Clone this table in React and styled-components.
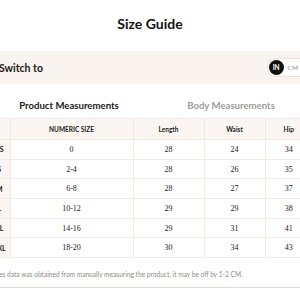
import React, { useState } from 'react'
import styled, { createGlobalStyle } from 'styled-components'

const GlobalStyle = createGlobalStyle`
  html, body {
    margin: 0;
    padding: 0;
    background: #fff;
    overflow: hidden;
  }
  body {
    font-family: Lato, "Noto Sans", sans-serif;
    color: #1a1a1a;
  }
`

const Modal = styled.div`
  width: 324px;
  margin-left: -12px;
  display: flex;
  flex-direction: column;
`

const Title = styled.h2`
  margin: 0;
  padding-top: 15px;
  height: 51px;
  box-sizing: border-box;
  text-align: center;
  font-size: 14px;
  font-weight: 700;
  color: #111;
`

const SwitchBar = styled.div`
  height: 33px;
  background: #f9f4f0;
  display: flex;
  align-items: center;
  justify-content: space-between;
  padding: 0 0 0 11px;
`

const SwitchLabel = styled.span`
  font-size: 10.5px;
  font-weight: 700;
  color: #1a1a1a;
`

const Pill = styled.div`
  display: flex;
  align-items: center;
  gap: 4px;
  background: #fff;
  border: 1px solid #e8e1da;
  border-radius: 9px;
  padding: 1px 13px 1px 1px;
`

const PillOption = styled.button`
  border: 0;
  cursor: pointer;
  font-family: Lato, "Noto Sans", sans-serif;
  font-size: 6.5px;
  font-weight: ${p => (p.$active ? 700 : 400)};
  padding: 0;
  width: ${p => (p.$active ? '15px' : 'auto')};
  height: 15px;
  border-radius: 8px;
  background: ${p => (p.$active ? '#111' : 'transparent')};
  color: ${p => (p.$active ? '#fff' : '#888')};
`

const Tabs = styled.div`
  display: flex;
  height: 34px;
  border-bottom: 1px solid #f1ece7;
`

const Tab = styled.button`
  flex: 1;
  border: 0;
  background: none;
  padding: 9px 0 0;
  cursor: pointer;
  font-family: Lato, "Noto Sans", sans-serif;
  font-size: 9.6px;
  font-weight: 700;
  color: ${p => (p.$active ? '#1a1a1a' : '#a09b97')};
`

const Table = styled.table`
  width: 324px;
  border-collapse: collapse;
  table-layout: fixed;
`

const HeadCell = styled.th`
  height: 20px;
  padding: 0;
  background: #fbf6f1;
  font-size: 6.5px;
  font-weight: 700;
  color: #1a1a1a;
  border-left: 1px solid #f1e8e0;
  border-bottom: 1px solid #f1e8e0;
  &:first-child { border-left: 0; }
`

const SizeCell = styled.td`
  height: 18.7px;
  padding: 0 0 0 1px;
  text-align: center;
  background: #fbf6f1;
  font-size: 7px;
  font-weight: 700;
  border-bottom: 1px solid #f1ece7;
`

const Cell = styled.td`
  height: 18.7px;
  padding: 0;
  text-align: center;
  font-family: "Liberation Serif", serif;
  font-size: 8px;
  color: #222;
  border-left: 1px solid #f1ece7;
  border-bottom: 1px solid #f1ece7;
`

const Note = styled.p`
  margin: 0;
  padding: 12px 0 0 3px;
  height: 30px;
  box-sizing: border-box;
  font-size: 6.6px;
  color: #8d8a87;
  white-space: nowrap;
  border-bottom: 1px solid #dedad6;
`

const rows = [
  ['XS', '0', 28, 24, 34],
  ['S', '2-4', 28, 26, 35],
  ['M', '6-8', 28, 27, 37],
  ['L', '10-12', 29, 29, 38],
  ['XL', '14-16', 29, 31, 41],
  ['XXL', '18-20', 30, 34, 43],
]

const App = () => {
  const [unit, setUnit] = useState('IN')
  const [tab, setTab] = useState('product')

  return (
    <>
      <GlobalStyle />
      <Modal>
        <Title>Size Guide</Title>
        <SwitchBar>
          <SwitchLabel>Switch to</SwitchLabel>
          <Pill>
            <PillOption $active={unit === 'IN'} onClick={() => setUnit('IN')}>IN</PillOption>
            <PillOption $active={unit === 'CM'} onClick={() => setUnit('CM')}>CM</PillOption>
          </Pill>
        </SwitchBar>
        <Tabs>
          <Tab $active={tab === 'product'} onClick={() => setTab('product')}>Product Measurements</Tab>
          <Tab $active={tab === 'body'} onClick={() => setTab('body')}>Body Measurements</Tab>
        </Tabs>
        <Table>
          <colgroup>
            <col style={{ width: 22 }} />
            <col style={{ width: 123 }} />
            <col style={{ width: 71 }} />
            <col style={{ width: 61 }} />
            <col style={{ width: 47 }} />
          </colgroup>
          <thead>
            <tr>
              <HeadCell />
              <HeadCell>NUMERIC SIZE</HeadCell>
              <HeadCell>Length</HeadCell>
              <HeadCell>Waist</HeadCell>
              <HeadCell>Hip</HeadCell>
            </tr>
          </thead>
          <tbody>
            {rows.map(r => (
              <tr key={r[0]}>
                <SizeCell>{r[0]}</SizeCell>
                <Cell>{r[1]}</Cell>
                <Cell>{r[2]}</Cell>
                <Cell>{r[3]}</Cell>
                <Cell>{r[4]}</Cell>
              </tr>
            ))}
          </tbody>
        </Table>
        <Note>Sizes data was obtained from manually measuring the product, it may be off by 1-2 CM.</Note>
      </Modal>
    </>
  )
}

export default App
